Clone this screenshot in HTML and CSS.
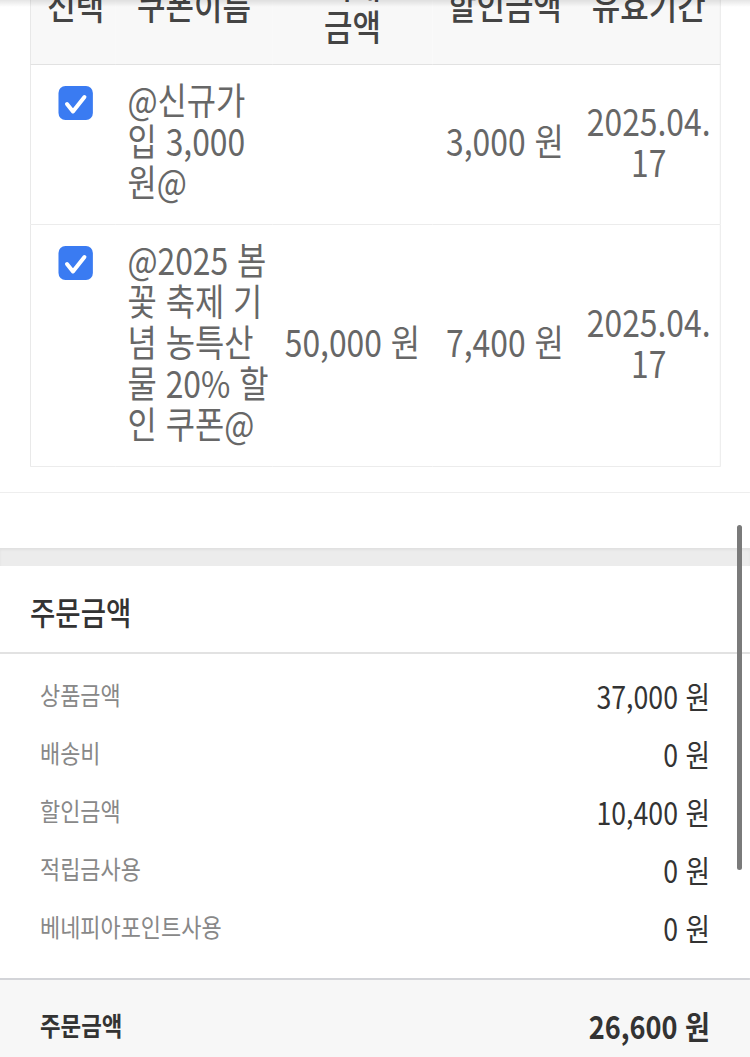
FILE: index.html
```html
<!DOCTYPE html>
<html lang="ko">
<head>
<meta charset="utf-8">
<title>쿠폰 / 주문금액</title>
<link rel="stylesheet" href="styles.css">
</head>
<body>
<div class="top-shadow"></div>
<div class="viewport">
<div class="page">
  <section class="coupon-section">
    <table class="coupon-table">
      <colgroup>
        <col class="c1"><col class="c2"><col class="c3"><col class="c4"><col class="c5">
      </colgroup>
      <thead>
        <tr>
          <th class="col-check">선택</th>
          <th>쿠폰이름</th>
          <th>최대<br>금액</th>
          <th>할인금액</th>
          <th>유효기간</th>
        </tr>
      </thead>
      <tbody>
        <tr>
          <td class="col-check"><span class="checkbox"><svg viewBox="0 0 34 34" preserveAspectRatio="none"><path d="M8.5 18 L14.5 25.5 L26 11" fill="none" stroke="#fff" stroke-width="4" stroke-linecap="round" stroke-linejoin="round"/></svg></span></td>
          <td class="name">@신규가입 3,000원@</td>
          <td class="num"></td>
          <td class="num">3,000 원</td>
          <td class="date">2025.04.17</td>
        </tr>
        <tr>
          <td class="col-check"><span class="checkbox"><svg viewBox="0 0 34 34" preserveAspectRatio="none"><path d="M8.5 18 L14.5 25.5 L26 11" fill="none" stroke="#fff" stroke-width="4" stroke-linecap="round" stroke-linejoin="round"/></svg></span></td>
          <td class="name">@2025 봄꽃 축제 기념 농특산물 20% 할인 쿠폰@</td>
          <td class="num">50,000 원</td>
          <td class="num">7,400 원</td>
          <td class="date">2025.04.17</td>
        </tr>
      </tbody>
    </table>
  </section>

  <div class="spacer"></div>
  <div class="band"></div>

  <section class="summary">
    <h2 class="summary-title">주문금액</h2>
    <ul class="summary-list">
      <li class="summary-row"><span class="label">상품금액</span><span class="value">37,000 원</span></li>
      <li class="summary-row"><span class="label">배송비</span><span class="value">0 원</span></li>
      <li class="summary-row"><span class="label">할인금액</span><span class="value">10,400 원</span></li>
      <li class="summary-row"><span class="label">적립금사용</span><span class="value">0 원</span></li>
      <li class="summary-row"><span class="label">베네피아포인트사용</span><span class="value">0 원</span></li>
    </ul>
    <div class="total-row"><span class="total-label">주문금액</span><span class="total-value">26,600 원</span></div>
  </section>
</div>
</div>
<div class="scrollbar"></div>
</body>
</html>
```

FILE: styles.css
```css
/* The device font is a condensed Hangul face; the page is drawn at
   872px and squeezed to the 750px screen (scaleX 0.86) to match it. */
html, body {
  margin: 0;
  padding: 0;
  background: #fff;
  overflow: hidden;
}
body {
  font-family: "Noto Sans CJK KR", "Noto Sans", sans-serif;
  color: #666;
  width: 750px;
  height: 1057px;
  position: relative;
}
.viewport {
  width: 750px;
  height: 1057px;
  overflow: hidden;
}
.page {
  width: 872px;
  margin-top: -49px;
  transform: scaleX(0.86);
  transform-origin: 0 0;
}
.top-shadow {
  position: absolute;
  top: 0;
  left: 0;
  right: 0;
  height: 7px;
  background: linear-gradient(to bottom, rgba(0,0,0,0.10), rgba(0,0,0,0));
  z-index: 5;
}
.coupon-section {
  padding: 0 34.9px 25px;
  border-bottom: 1px solid #eeeeee;
}
.coupon-table {
  width: 802.3px;
  border-collapse: collapse;
  table-layout: fixed;
  border: 1px solid #e6e6e6;
}
.c1 { width: 98.8px; }
.c2 { width: 182.6px; }
.c3 { width: 186px; }
.c4 { width: 168.6px; }
.c5 { width: 166.3px; }

.coupon-table th {
  background: #f8f8f8;
  color: #444;
  font-weight: 500;
  font-size: 36px;
  line-height: 42px;
  padding: 10px 4px 18px;
  text-align: center;
  vertical-align: middle;
  border-bottom: 1px solid #e2e2e2;
  white-space: nowrap;
}
.coupon-table th.col-check {
  padding-left: 10px;
}
.coupon-table td {
  font-size: 37px;
  line-height: 41px;
  color: #676767;
  padding: 14px 7px 22px;
  vertical-align: middle;
  text-align: center;
  word-break: break-all;
  border-bottom: 1px solid #ececec;
}
.coupon-table td.col-check {
  vertical-align: top;
  padding: 21px 0 0 6px;
}
.coupon-table td.name {
  text-align: left;
  padding-left: 14px;
  padding-right: 2px;
}
.checkbox {
  display: block;
  width: 39.5px;
  height: 34px;
  margin: 0 auto;
  background: #3a7bf2;
  border-radius: 8px / 7px;
}
.checkbox svg {
  display: block;
  width: 39.5px;
  height: 34px;
}

.spacer {
  height: 55px;
}
.band {
  height: 18px;
  background: #ececec;
  box-shadow: inset 0 2px 3px rgba(0,0,0,0.05);
}

.summary-title {
  margin: 0;
  padding: 27px 34.9px 23px;
  font-size: 32px;
  line-height: 36px;
  font-weight: 500;
  color: #333;
  border-bottom: 2px solid #e2e2e2;
}
.summary-list {
  list-style: none;
  margin: 0;
  padding: 13px 46.5px 21px;
  border-bottom: 2px solid #d3d4d8;
}
.summary-row {
  height: 58px;
  display: flex;
  justify-content: space-between;
  align-items: center;
}
.label {
  font-size: 25.5px;
  color: #888;
  margin-bottom: 6px;
}
.value {
  font-size: 31px;
  color: #333;
  margin-bottom: 2px;
}
.total-row {
  background: #f7f7f7;
  display: flex;
  justify-content: space-between;
  align-items: center;
  padding: 25px 46.5px 42px;
  line-height: 40px;
}
.total-label {
  font-size: 26px;
  font-weight: 700;
  color: #333;
}
.total-value {
  font-size: 31.5px;
  font-weight: 700;
  color: #333;
}
.scrollbar {
  position: absolute;
  top: 525px;
  right: 8px;
  width: 5px;
  height: 345px;
  border-radius: 3px;
  background: #7a7a7a;
}
```
